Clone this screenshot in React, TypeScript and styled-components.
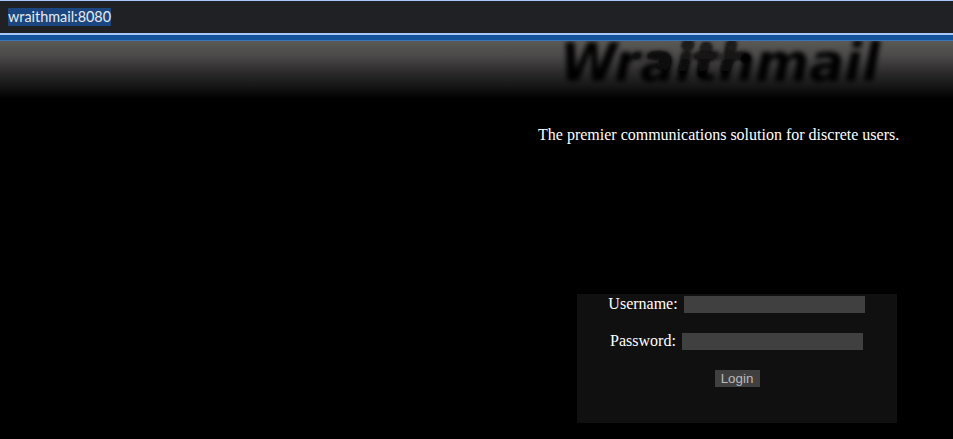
import React from "react";
import styled, { createGlobalStyle } from "styled-components";

const GlobalStyle = createGlobalStyle`
  html, body { margin: 0; background: #000; overflow: hidden; }
  * { box-sizing: border-box; }
`;

const Page = styled.div`
  display: flex;
  flex-direction: column;
  height: 439px;
  background: #000;
  color: #fff;
  font-family: "Liberation Serif", serif;
  font-size: 16px;
  line-height: 18px;
`;

const AddressBar = styled.header`
  display: flex;
  align-items: flex-start;
  flex: none;
  height: 35px;
  padding: 7px 0 0 8px;
  background: #202124;
  border-top: 1px solid #a8c7fa;
  border-bottom: 2px solid #a8c7fa;
`;

const Address = styled.span`
  width: 103px;
  height: 18px;
  background: #1c4680;
  color: #e8eaed;
  font: 14.4px/18px Lato, sans-serif;
  white-space: nowrap;
`;

const Accent = styled.div`
  flex: none;
  height: 6px;
  background: #14529c;
  border-bottom: 1px solid #3a73b8;
`;

const Banner = styled.div`
  display: flex;
  flex: none;
  height: 58px;
  padding-left: 540px;
  background: linear-gradient(#5b5955 0, #4c4a4a 14px, #2d2b2c 31px, #161616 45px, #000 58px);
`;

const Logo = styled.svg`
  display: block;
  width: 360px;
  height: 58px;
  overflow: visible;
`;

const LogoText = styled.text`
  font: italic bold 54px "DejaVu Sans", sans-serif;
`;

const Content = styled.main`
  display: flex;
  flex-direction: column;
  width: 400px;
  margin-left: 518px;
`;

const Tagline = styled.p`
  margin: 27px 0 150px 20px;
  white-space: nowrap;
`;

const Form = styled.form`
  display: flex;
  flex-direction: column;
  align-items: center;
  gap: 17px;
  width: 320px;
  height: 129px;
  margin-left: 59px;
  padding-right: 0.8px;
  background: #101010;
`;

const Field = styled.label`
  display: flex;
  align-items: flex-start;
  height: 20px;
  line-height: 19px;
  white-space: nowrap;
`;

const Input = styled.input`
  width: 181px;
  height: 17px;
  margin: 2px 0 0 6.2px;
  padding: 1px;
  border: 0;
  border-radius: 0;
  outline: 0;
  background: #404040;
  color: #ccc;
`;

const Button = styled.button`
  width: 45px;
  height: 17px;
  margin: 2px 0 0 0.8px;
  padding: 1px 6px;
  border: 0;
  background: #404040;
  color: #bbb;
  font: 13.333px/15px "Liberation Sans", sans-serif;
`;

export default function App() {
  return (
    <Page>
      <GlobalStyle />
      <AddressBar><Address>wraithmail:8080</Address></AddressBar>
      <Accent />
      <Banner>
        <Logo viewBox="540 41 360 58" role="img" aria-label="Wraithmail">
          <defs>
            <clipPath id="banner"><rect x="540" y="41" width="360" height="58" /></clipPath>
            <filter id="haze" x="-10%" y="-30%" width="120%" height="160%">
              <feGaussianBlur stdDeviation="2.5" />
            </filter>
            <filter id="soft" x="-20%" y="-20%" width="140%" height="140%">
              <feGaussianBlur stdDeviation="0.8" />
            </filter>
            <linearGradient id="ink" gradientUnits="userSpaceOnUse" x1="0" y1="41" x2="0" y2="75">
              <stop offset="0" stopColor="#201f1f" />
              <stop offset=".35" stopColor="#191818" />
              <stop offset=".7" stopColor="#0b0b0b" />
              <stop offset="1" stopColor="#040404" />
            </linearGradient>
          </defs>
          <g clipPath="url(#banner)">
            <LogoText x="560" y="81" textLength="320" lengthAdjust="spacingAndGlyphs" fill="#000" filter="url(#haze)">
              Wraithmail
            </LogoText>
            <g filter="url(#soft)" strokeLinecap="round" strokeLinejoin="round">
              <circle cx="636.5" cy="56" r="2.5" fill="#080808" />
              <path d="M648 57C647 51 665 50 669 55C673 61 670 66 667 70C662 70 657 68 656 65L661 61C657 59 650 60 648 57Z" fill="#080808" />
              <path d="M689 57L725 57" stroke="#292828" strokeWidth="5.5" fill="none" />
              <circle cx="687.5" cy="45.5" r="6" fill="url(#ink)" />
              <g fill="none" stroke="url(#ink)">
                <path d="M686.5 55L682.5 70.5" strokeWidth="7.5" />
                <path d="M706 48L702 73" strokeWidth="8.5" />
                <path d="M696 56C701 60 708 60 715 56" strokeWidth="5" />
                <path d="M732 45L725 70" strokeWidth="8.5" />
                <path d="M727 65C730 56 737 53 745 58" strokeWidth="6.5" />
              </g>
              <circle cx="706" cy="47.5" r="5.5" fill="url(#ink)" />
              <circle cx="745.5" cy="58.5" r="4.8" fill="#060606" />
            </g>
          </g>
        </Logo>
      </Banner>
      <Content>
        <Tagline>The premier communications solution for discrete users.</Tagline>
        <Form onSubmit={(event) => event.preventDefault()}>
          <Field>Username:<Input type="text" name="username" /></Field>
          <Field>Password:<Input type="password" name="password" /></Field>
          <Button type="submit">Login</Button>
        </Form>
      </Content>
    </Page>
  );
}
